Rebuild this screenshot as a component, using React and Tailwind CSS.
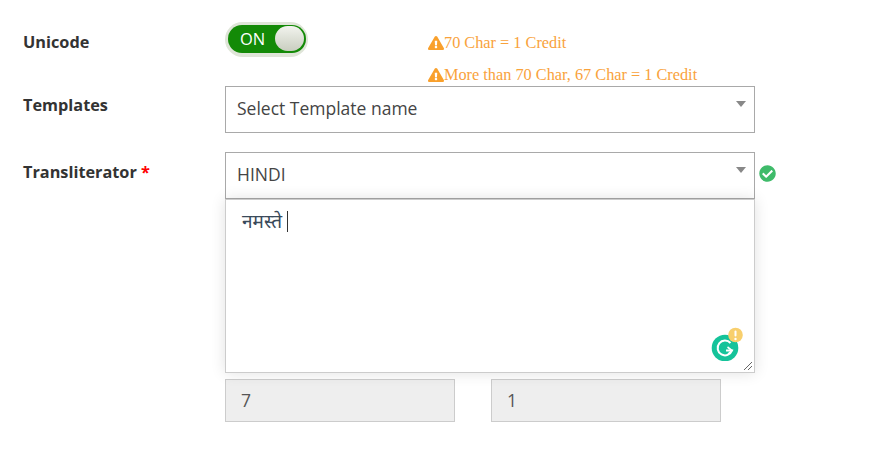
import { FaCheckCircle, FaExclamationTriangle } from "react-icons/fa";

const Label = ({ children, className = "" }) => (
  <label className={`w-[225px] shrink-0 pl-[23px] font-bold text-[16.3px] text-[#333] ${className}`}>
    {children}
  </label>
);

const Note = ({ children }) => (
  <p className="flex items-center h-[32px] font-['Liberation_Serif',serif] text-[16.3px] text-[#f9a23b]">
    <FaExclamationTriangle className="w-[16px] h-[16px] text-[#f9a02c]" />
    {children}
  </p>
);

const SelectBox = ({ value }) => (
  <div className="relative w-[530px] h-[47px] border border-[#a9a9a9] bg-white pl-[11px] pb-[2px] flex items-center text-[17.5px] text-[#444]">
    {value}
    <span className="absolute right-[8px] top-[14px] w-0 h-0 border-x-[5px] border-x-transparent border-t-[6px] border-t-[#888]"></span>
  </div>
);

const GrammarlyBadge = () => (
  <svg viewBox="0 0 32 34" className="absolute left-[485px] top-[127px] w-[32px] h-[34px]">
    <circle cx="14" cy="21" r="13.3" fill="#15c39a" />
    <path d="M19.5 16A7.4 7.4 0 1 0 21 23.5L15 23.5" fill="none" stroke="#fff" strokeWidth="2" />
    <path d="M16.5 20L21 23.5L17 27" fill="none" stroke="#fff" strokeWidth="1.6" />
    <circle cx="24.5" cy="8" r="7.3" fill="#f8cf6d" />
    <rect x="23.5" y="3.5" width="2" height="6" rx="1" fill="#fff" />
    <circle cx="24.5" cy="12" r="1.2" fill="#fff" />
  </svg>
);

export default function App() {
  return (
    <div className="w-[886px] h-[460px] bg-white overflow-hidden font-['Open_Sans',sans-serif]">
      {/* Unicode row */}
      <div className="flex h-[86px] pt-[22px]">
        <Label className="pt-[8px]">Unicode</Label>
        <div className="w-[203px] shrink-0">
          <div className="w-[83px] h-[35px] rounded-full bg-[#dfe5d8] pt-[3px] px-[3px]">
            <div className="relative w-[78px] h-[28px] rounded-full bg-[#138a07] pl-[12px] flex items-center text-[16.5px] text-white">
              ON
              <span className="absolute right-[2px] top-[1px] w-[29px] h-[25px] rounded-full bg-gradient-to-b from-[#f2f3ee] to-[#c9cec0]"></span>
            </div>
          </div>
        </div>
        <div className="pt-[5px]">
          <Note>70 Char = 1 Credit</Note>
          <Note>More than 70 Char, 67 Char = 1 Credit</Note>
        </div>
      </div>

      {/* Templates row */}
      <div className="flex h-[66px]">
        <Label className="pt-[7px]">Templates</Label>
        <SelectBox value="Select Template name" />
      </div>

      {/* Transliterator row */}
      <div className="flex">
        <Label className="pt-[8px]">
          Transliterator <span className="text-[#f00]">*</span>
        </Label>
        <div className="relative">
          <div className="flex items-center">
            <SelectBox value="HINDI" />
            <FaCheckCircle className="ml-[4px] -mt-[5px] w-[17px] h-[17px] text-[#3fbb6a]" />
          </div>
          <div className="relative w-[530px] h-[174px] border border-[#ccc] bg-white shadow-[0_0_14px_rgba(0,0,0,0.12)] pl-[16px] pt-[7px]">
            <div className="flex items-center h-[28px] text-[19px] text-[#3a4a5a] font-['Noto_Sans',sans-serif]">
              नमस्ते<span className="ml-[5px] w-px h-[21px] bg-[#333]"></span>
            </div>
            <GrammarlyBadge />
            <svg viewBox="0 0 10 10" className="absolute right-[1px] bottom-[1px] w-[10px] h-[10px]">
              <path d="M1 9L9 1M5 9L9 5" stroke="#666" strokeWidth="1" />
            </svg>
          </div>
          <div className="flex gap-[36px] mt-[6px]">
            <div className="w-[230px] h-[43px] border border-[#ccc] bg-[#eee] pl-[15px] flex items-center text-[17.5px] text-[#555]">7</div>
            <div className="w-[230px] h-[43px] border border-[#ccc] bg-[#eee] pl-[15px] flex items-center text-[17.5px] text-[#555]">1</div>
          </div>
        </div>
      </div>
    </div>
  );
}
